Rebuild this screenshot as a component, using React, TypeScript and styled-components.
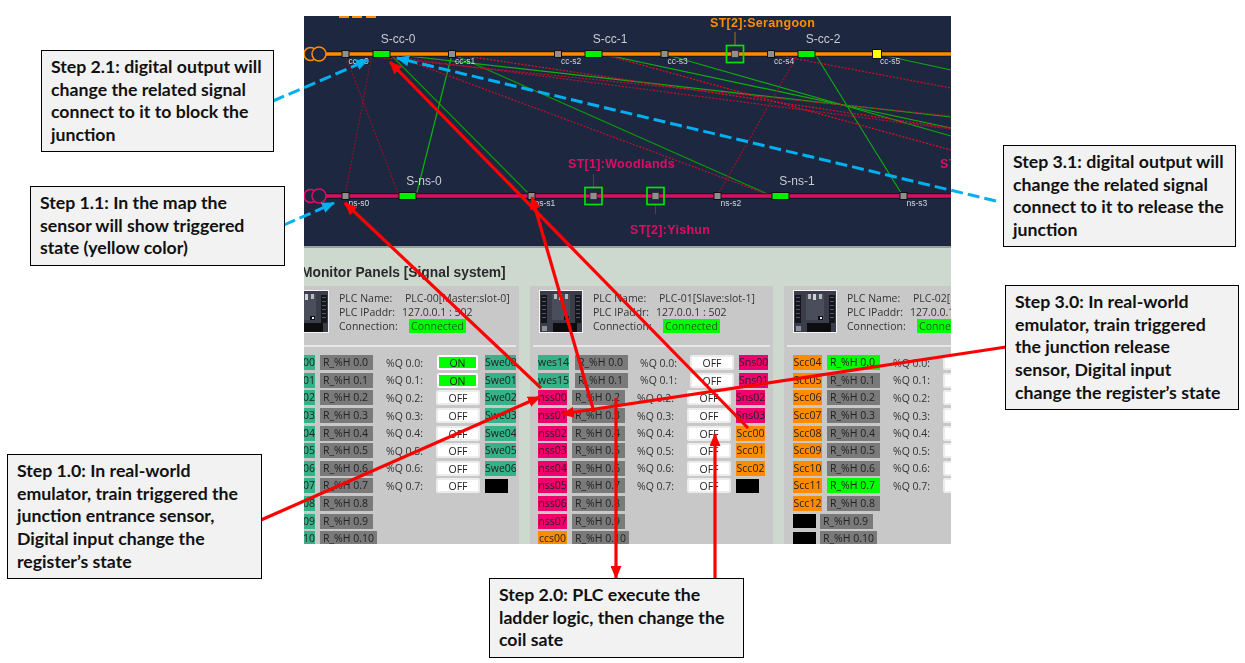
import React from 'react';
import styled, { createGlobalStyle } from 'styled-components';

const GlobalStyle = createGlobalStyle`
  html, body {
    margin: 0;
    padding: 0;
    background: #fff;
  }
`;

const Page = styled.div`
  position: relative;
  width: 1245px;
  height: 663px;
  padding: 16px 0 0 304px;
  box-sizing: border-box;
  overflow: hidden;
  background: #fff;
`;

const Shot = styled.div`
  width: 647px;
  height: 528px;
  overflow: hidden;
  display: flex;
  flex-direction: column;
  background: #cdd8cf;
  filter: blur(0.3px);
`;

const MapSvg = styled.svg`
  display: block;
  flex: none;
  background: #1e2740;
  border-bottom: 2px solid #9aa09c;
`;

const MonitorArea = styled.div`
  flex: 1;
  min-height: 0;
  background: #cdd8cf;
  font-family: 'Open Sans', sans-serif;
  color: #333;
`;

const MonitorTitle = styled.h2`
  margin: 16px 0 0 -3px;
  height: 22px;
  font-family: 'Liberation Sans', Arial, sans-serif;
  font-size: 13.8px;
  line-height: 17px;
  font-weight: 700;
  color: #2a2a2a;
  white-space: nowrap;
`;

const PanelStrip = styled.div`
  display: flex;
  gap: 11px;
  margin-left: -28px;
`;

const Panel = styled.section`
  flex: none;
  width: 243px;
  height: 260px;
  background: #c8c8c8;
  box-sizing: border-box;
  padding-top: 4px;
`;

const PanelHead = styled.div`
  display: flex;
  gap: 10px;
  height: 57px;
  margin: 0 3px;
  padding-left: 6px;
  border-bottom: 2px solid #e6e6e6;
  box-sizing: border-box;
`;

const Thumb = styled.svg`
  display: block;
  flex: none;
`;

const Info = styled.div`
  padding-top: 1px;
  white-space: nowrap;
`;

const InfoRow = styled.div`
  display: flex;
  align-items: center;
  height: 14px;
  font-size: 10.5px;
  line-height: 14px;
`;

const InfoLabel = styled.span<{ $w: number }>`
  flex: none;
  width: ${p => p.$w}px;
`;

const Badge = styled.span`
  flex: none;
  margin-left: 4px;
  width: 57px;
  height: 14px;
  line-height: 14px;
  text-align: center;
  background: #00ff00;
  color: #1c5a1c;
`;

const Rows = styled.div`
  padding-top: 7px;
  display: grid;
  grid-auto-rows: 17.6px;
`;

const Row = styled.div<{ $inset: number }>`
  display: flex;
  align-items: center;
  padding-left: ${p => p.$inset}px;
  font-size: 10.5px;
`;

const tagColors: Record<string, string> = {
  teal: '#35b287',
  pink: '#f0006e',
  orange: '#ff8c00',
  black: '#000',
};

const Tag = styled.span<{ $tone: string; $w: number }>`
  flex: none;
  width: ${p => p.$w}px;
  height: ${p => (p.$tone === 'black' ? 14 : 15)}px;
  line-height: 15px;
  text-align: center;
  overflow: hidden;
  white-space: nowrap;
  background: ${p => tagColors[p.$tone]};
  color: #222;
`;

const Reg = styled.span<{ $on?: boolean; $w: number; $gap: number }>`
  flex: none;
  margin-left: ${p => p.$gap}px;
  width: ${p => p.$w}px;
  height: 15px;
  line-height: 15px;
  padding-left: 3px;
  box-sizing: border-box;
  white-space: nowrap;
  background: ${p => (p.$on ? '#00ff00' : '#7a7a7a')};
  color: #222;
`;

const QLabel = styled.span<{ $gap: number }>`
  flex: none;
  margin-left: ${p => p.$gap}px;
  width: 50px;
  white-space: nowrap;
  color: #333;
`;

const Coil = styled.span<{ $on?: boolean }>`
  flex: none;
  width: ${p => (p.$on ? 41 : 44)}px;
  margin-left: ${p => (p.$on ? 1 : 0)}px;
  margin-right: ${p => (p.$on ? 2 : 0)}px;
  height: 15px;
  line-height: 13px;
  box-sizing: border-box;
  text-align: center;
  border: 2px solid ${p => (p.$on ? '#fff' : '#ececec')};
  border-radius: 2px;
  background: ${p => (p.$on ? '#00ff00' : '#fff')};
  color: #222;
`;

const RightTag = styled(Tag)`
  margin-left: 5px;
`;

const ArrowLayer = styled.svg`
  position: absolute;
  left: 0;
  top: 0;
`;

const Callout = styled.div<{ $x: number; $y: number; $w: number; $h: number }>`
  position: absolute;
  left: ${p => p.$x}px;
  top: ${p => p.$y}px;
  width: ${p => p.$w}px;
  height: ${p => p.$h}px;
  box-sizing: border-box;
  padding: 5px 0 0 9px;
  background: #f2f2f2;
  border: 1px solid #000;
  font-family: Lato, 'Open Sans', sans-serif;
  font-size: 17.7px;
  font-weight: 700;
  line-height: 22.7px;
  color: #111;
  white-space: nowrap;
`;

type PlcRow = {
  left: string | null;
  leftTone: string;
  reg: string;
  regOn?: boolean;
  regW?: number;
  q?: string;
  coilOn?: boolean;
  right?: string | null;
  rightTone?: string;
  inset: number;
  tagW: number;
  gapA: number;
  gapB: number;
  rightW: number;
};

const makeRows = (
  lefts: [string | null, string][],
  rights: [string | null, string][],
  inset: number,
  tagW: number,
  gapA: number,
  gapB: number,
  rightW: number,
  onRegs: number[],
  onCoils: number[],
): PlcRow[] =>
  lefts.map(([left, leftTone], i) => ({
    left,
    leftTone,
    reg: `R_%H 0.${i}`,
    regOn: onRegs.includes(i),
    regW: i === 10 ? 57 : 53,
    q: i < 8 ? `%Q 0.${i}:` : undefined,
    coilOn: onCoils.includes(i),
    right: rights[i]?.[0],
    rightTone: rights[i]?.[1],
    inset,
    tagW,
    gapA,
    gapB,
    rightW,
  }));

const pad = (n: number) => String(n).padStart(2, '0');

const panel0 = makeRows(
  Array.from({ length: 11 }, (_, i) => [`wes${pad(i)}`, 'teal'] as [string, string]),
  [
    ...Array.from({ length: 7 }, (_, i) => [`Swe${pad(i)}`, 'teal'] as [string, string]),
    [null, 'black'],
  ],
  8, 31, 5, 13, 31, [], [0, 1],
);

const panel1 = makeRows(
  [
    ['wes14', 'teal'],
    ['wes15', 'teal'],
    ...Array.from({ length: 8 }, (_, i) => [`nss${pad(i)}`, 'pink'] as [string, string]),
    ['ccs00', 'orange'],
  ],
  [
    ...Array.from({ length: 4 }, (_, i) => [`Sns${pad(i)}`, 'pink'] as [string, string]),
    ...Array.from({ length: 3 }, (_, i) => [`Scc${pad(i)}`, 'orange'] as [string, string]),
    [null, 'black'],
  ],
  8, 29, 5, 12, 29, [], [],
).map((r, i) => (i < 2 ? { ...r, tagW: 31, gapA: 6 } : r));

const panel2 = makeRows(
  [
    ...Array.from({ length: 9 }, (_, i) => [`Scc${pad(i + 4)}`, 'orange'] as [string, string]),
    [null, 'black'],
    [null, 'black'],
  ],
  [],
  9, 29, 5, 13, 29, [0, 7], [],
).map((r, i) => (i > 8 ? { ...r, tagW: 23, gapA: 4 } : r));

const panels = [
  { name: 'PLC-00[Master:slot-0]', rows: panel0 },
  { name: 'PLC-01[Slave:slot-1]', rows: panel1 },
  { name: 'PLC-02[Slave:slot-2]', rows: panel2 },
];

const PlcThumb: React.FC = () => (
  <Thumb width="44" height="43" viewBox="0 0 44 43">
    <rect width="44" height="43" fill="#f4f4f4" />
    <rect x="1" y="1" width="42" height="41" fill="#3b3e4a" />
    <rect x="13" y="4" width="18" height="26" fill="#4a4e5b" />
    <rect x="2" y="5" width="6" height="28" fill="#15161b" />
    <rect x="36" y="5" width="6" height="28" fill="#15161b" />
    <g fill="#555963">
      <rect x="3" y="7" width="4" height="1" />
      <rect x="3" y="11" width="4" height="1" />
      <rect x="3" y="15" width="4" height="1" />
      <rect x="3" y="19" width="4" height="1" />
      <rect x="3" y="23" width="4" height="1" />
      <rect x="3" y="27" width="4" height="1" />
      <rect x="37" y="7" width="4" height="1" />
      <rect x="37" y="11" width="4" height="1" />
      <rect x="37" y="15" width="4" height="1" />
      <rect x="37" y="19" width="4" height="1" />
      <rect x="37" y="23" width="4" height="1" />
      <rect x="37" y="27" width="4" height="1" />
    </g>
    <rect x="15" y="4" width="3" height="5" fill="#b8bac0" />
    <rect x="20" y="4" width="3" height="6" fill="#d0d2d6" />
    <rect x="26" y="4" width="3" height="5" fill="#b8bac0" />
    <rect x="25" y="26" width="5" height="4" fill="#111" />
    <rect x="27" y="27" width="2" height="2" fill="#eee" />
    <rect x="14" y="33" width="24" height="9" fill="#0d0d10" />
    <rect x="3" y="36" width="5" height="5" fill="#8d9096" />
  </Thumb>
);

const Green: React.FC<{ x1: number; y1: number; x2: number; y2: number; c?: string }> = ({ x1, y1, x2, y2, c = '#0cab0c' }) => (
  <line x1={x1} y1={y1} x2={x2} y2={y2} stroke={c} strokeWidth="1.2" />
);

const Dotted: React.FC<{ x1: number; y1: number; x2: number; y2: number; c?: string }> = ({ x1, y1, x2, y2, c = '#c0102c' }) => (
  <line x1={x1} y1={y1} x2={x2} y2={y2} stroke={c} strokeWidth="1.2" strokeDasharray="2 1.5" />
);

const Sensor: React.FC<{ x: number; y: number; label: string }> = ({ x, y, label }) => (
  <g>
    <rect x={x - 3.5} y={y - 3.5} width="7" height="7" fill="#8f8f8f" stroke="#111" strokeWidth="1" />
    <text x={x + 3} y={y + 10} fontSize="8.5" fill="#d4d7dd" fontFamily="Liberation Sans, Arial, sans-serif">{label}</text>
  </g>
);

const Signal: React.FC<{ x: number; y: number; label: string }> = ({ x, y, label }) => (
  <g>
    <rect x={x} y={y - 3.5} width="17" height="7" fill="#00f000" stroke="#111" strokeWidth="1" />
    <text x={x + 25} y={y - 11} textAnchor="middle" fontSize="12" fill="#c8ccd4" fontFamily="Liberation Sans, Arial, sans-serif">{label}</text>
  </g>
);

const Station: React.FC<{ x: number; y: number; up: boolean; color: string; label: string; tx: number; ty: number }> = ({ x, y, up, color, label, tx, ty }) => (
  <g>
    <line x1={x} y1={up ? y - 22 : y + 9} x2={x} y2={up ? y - 9 : y + 18} stroke={color} strokeWidth="1" opacity="0.7" />
    <rect x={x - 8.5} y={y - 8.5} width="17" height="17" fill="none" stroke="#08e008" strokeWidth="1.7" />
    <rect x={x - 3.5} y={y - 3.5} width="7" height="7" fill="#8f8f8f" stroke="#222" strokeWidth="0.7" />
    <text x={tx} y={ty} fontSize="12.5" fontWeight="700" letterSpacing="0.3" fill={color} fontFamily="Liberation Sans, Arial, sans-serif">{label}</text>
  </g>
);

const RailMap: React.FC = () => (
  <MapSvg width="647" height="230" viewBox="304 16 647 230">
    <g fill="#ff8c00">
      <rect x="339" y="16" width="10" height="2" />
      <rect x="352" y="16" width="10" height="2" />
      <rect x="366" y="16" width="10" height="2" />
    </g>

    <Green x1={390} y1={54} x2={531} y2={196} c="#0a9a0a" />
    <Green x1={416} y1={196} x2={452} y2={54} c="#10b010" />
    <Green x1={390} y1={54} x2={951} y2={117} c="#10b010" />
    <Green x1={452} y1={54} x2={772} y2={196} c="#0a9a0a" />
    <Green x1={602} y1={54} x2={951} y2={128} c="#10b010" />
    <Green x1={664} y1={54} x2={951} y2={136} c="#10a810" />
    <Green x1={815} y1={54} x2={903} y2={196} c="#10a810" />
    <Green x1={877} y1={54} x2={951} y2={70} c="#10a810" />

    <Dotted x1={345} y1={54} x2={399} y2={196} c="#8e1228" />
    <Dotted x1={372} y1={54} x2={345} y2={196} c="#8e1228" />
    <Dotted x1={390} y1={54} x2={772} y2={196} />
    <Dotted x1={345} y1={54} x2={951} y2={116} />
    <Dotted x1={372} y1={54} x2={951} y2={129} />
    <Dotted x1={602} y1={54} x2={951} y2={150} c="#e01020" />
    <Dotted x1={452} y1={54} x2={951} y2={128} c="#e01020" />
    <Dotted x1={776} y1={55} x2={951} y2={88} c="#d01020" />
    <Dotted x1={798} y1={54} x2={717} y2={196} c="#a01028" />

    <line x1="326" y1="54" x2="951" y2="54" stroke="#16181f" strokeWidth="5.5" />
    <line x1="326" y1="54" x2="951" y2="54" stroke="#ff8c00" strokeWidth="3.5" />
    <line x1="326" y1="196" x2="951" y2="196" stroke="#16181f" strokeWidth="5.5" />
    <line x1="326" y1="196" x2="951" y2="196" stroke="#dc0e64" strokeWidth="3.5" />

    <circle cx="310.5" cy="54" r="6.5" fill="none" stroke="#ff8c00" strokeWidth="1.5" />
    <circle cx="319" cy="54" r="7" fill="#1e2740" stroke="#ff8c00" strokeWidth="1.5" />
    <circle cx="310.5" cy="196" r="6.5" fill="none" stroke="#dc0e64" strokeWidth="1.5" />
    <circle cx="319" cy="196" r="7" fill="#1e2740" stroke="#dc0e64" strokeWidth="1.5" />

    <Sensor x={345.5} y={54} label="cc-s0" />
    <Sensor x={452} y={54} label="cc-s1" />
    <Sensor x={558} y={54} label="cc-s2" />
    <Sensor x={664.5} y={54} label="cc-s3" />
    <Sensor x={771} y={54} label="cc-s4" />
    <rect x="872.5" y="49.5" width="9" height="9" fill="#ffff00" stroke="#111" strokeWidth="1" />
    <text x="880" y="64" fontSize="8.5" fill="#d4d7dd" fontFamily="Liberation Sans, Arial, sans-serif">cc-s5</text>

    <Sensor x={345.5} y={196} label="ns-s0" />
    <Sensor x={531.5} y={196} label="ns-s1" />
    <Sensor x={717.5} y={196} label="ns-s2" />
    <Sensor x={903.5} y={196} label="ns-s3" />

    <Signal x={373} y={54} label="S-cc-0" />
    <Signal x={585} y={54} label="S-cc-1" />
    <Signal x={798} y={54} label="S-cc-2" />
    <Signal x={399} y={196} label="S-ns-0" />
    <Signal x={772} y={196} label="S-ns-1" />

    <Station x={735} y={54} up color="#ff8c00" label="ST[2]:Serangoon" tx={710} ty={27} />
    <Station x={593.5} y={196} up color="#dc0e64" label="ST[1]:Woodlands" tx={568} ty={168} />
    <Station x={655.5} y={196} up={false} color="#dc0e64" label="ST[2]:Yishun" tx={630} ty={234} />
    <text x="940" y="168" fontSize="12.5" fontWeight="700" letterSpacing="0.3" fill="#dc0e64" fontFamily="Liberation Sans, Arial, sans-serif">ST</text>
  </MapSvg>
);

const BlueLine: React.FC<{ x1: number; y1: number; x2: number; y2: number }> = p => (
  <line {...p} stroke="#00b0f0" strokeWidth="3" strokeDasharray="12 5" markerEnd="url(#blueHead)" />
);

const RedLine: React.FC<{ x1: number; y1: number; x2: number; y2: number }> = p => (
  <line {...p} stroke="#ff0000" strokeWidth="3.2" markerEnd="url(#redHead)" />
);

const Arrows: React.FC = () => (
  <ArrowLayer width="1245" height="663" viewBox="0 0 1245 663">
    <defs>
      <marker id="blueHead" markerUnits="userSpaceOnUse" markerWidth="13" markerHeight="11" refX="12" refY="5.5" orient="auto">
        <path d="M0 0 L13 5.5 L0 11 Z" fill="#00b0f0" />
      </marker>
      <marker id="redHead" markerUnits="userSpaceOnUse" markerWidth="13" markerHeight="11" refX="12" refY="5.5" orient="auto">
        <path d="M0 0 L13 5.5 L0 11 Z" fill="#ff0000" />
      </marker>
    </defs>
    <BlueLine x1={273} y1={101} x2={368} y2={60} />
    <BlueLine x1={284} y1={225} x2={334} y2={203} />
    <BlueLine x1={996} y1={201} x2={397} y2={58} />

    <RedLine x1={541} y1={388} x2={345} y2={203} />
    <RedLine x1={594} y1={412} x2={532} y2={197} />
    <RedLine x1={748} y1={428} x2={390} y2={62} />
    <RedLine x1={261} y1={520} x2={540} y2={397} />
    <RedLine x1={1006} y1={347} x2={562} y2={414} />
    <RedLine x1={616} y1={398} x2={616} y2={578} />
    <RedLine x1={715} y1={578} x2={715} y2={434} />
  </ArrowLayer>
);

const callouts = [
  { x: 41, y: 50, w: 233, h: 102, lines: ['Step 2.1: digital output will', 'change the related signal', 'connect to it to block the', 'junction'] },
  { x: 30, y: 186, w: 255, h: 80, lines: ['Step 1.1: In the map the', 'sensor will show triggered', 'state (yellow color)'] },
  { x: 1003, y: 145, w: 233, h: 102, lines: ['Step 3.1: digital output will', 'change the related signal', 'connect to it to release the', 'junction'] },
  { x: 1005, y: 285, w: 234, h: 125, lines: ['Step 3.0: In real-world', 'emulator, train triggered', 'the junction release', 'sensor, Digital input', 'change the register’s state'] },
  { x: 7, y: 454, w: 255, h: 125, lines: ['Step 1.0: In real-world', 'emulator, train triggered the', 'junction entrance sensor,', 'Digital input change the', 'register’s state'] },
  { x: 489, y: 578, w: 255, h: 80, lines: ['Step 2.0: PLC execute the', 'ladder logic, then change the', 'coil sate'] },
];

const App: React.FC = () => (
  <Page>
    <GlobalStyle />
    <Shot>
      <RailMap />
      <MonitorArea>
        <MonitorTitle>Monitor Panels [Signal system]</MonitorTitle>
        <PanelStrip>
          {panels.map(panel => (
            <Panel key={panel.name}>
              <PanelHead>
                <PlcThumb />
                <Info>
                  <InfoRow><InfoLabel $w={66}>PLC Name:</InfoLabel>{panel.name}</InfoRow>
                  <InfoRow><InfoLabel $w={63}>PLC IPaddr:</InfoLabel>127.0.0.1 : 502</InfoRow>
                  <InfoRow><InfoLabel $w={66}>Connection:</InfoLabel><Badge>Connected</Badge></InfoRow>
                </Info>
              </PanelHead>
              <Rows>
                {panel.rows.map(r => (
                  <Row key={r.reg} $inset={r.inset}>
                    <Tag $tone={r.leftTone} $w={r.tagW}>{r.left}</Tag>
                    <Reg $on={r.regOn} $w={r.regW ?? 53} $gap={r.gapA}>{r.reg}</Reg>
                    {r.q && <QLabel $gap={r.gapB}>{r.q}</QLabel>}
                    {r.q && <Coil $on={r.coilOn}>{r.coilOn ? 'ON' : 'OFF'}</Coil>}
                    {r.rightTone && (
                      <RightTag $tone={r.rightTone} $w={r.rightTone === 'black' ? 23 : r.rightW}>{r.right}</RightTag>
                    )}
                  </Row>
                ))}
              </Rows>
            </Panel>
          ))}
        </PanelStrip>
      </MonitorArea>
    </Shot>
    <Arrows />
    {callouts.map(c => (
      <Callout key={c.lines[0]} $x={c.x} $y={c.y} $w={c.w} $h={c.h}>
        {c.lines.map(line => <div key={line}>{line}</div>)}
      </Callout>
    ))}
  </Page>
);

export default App;
